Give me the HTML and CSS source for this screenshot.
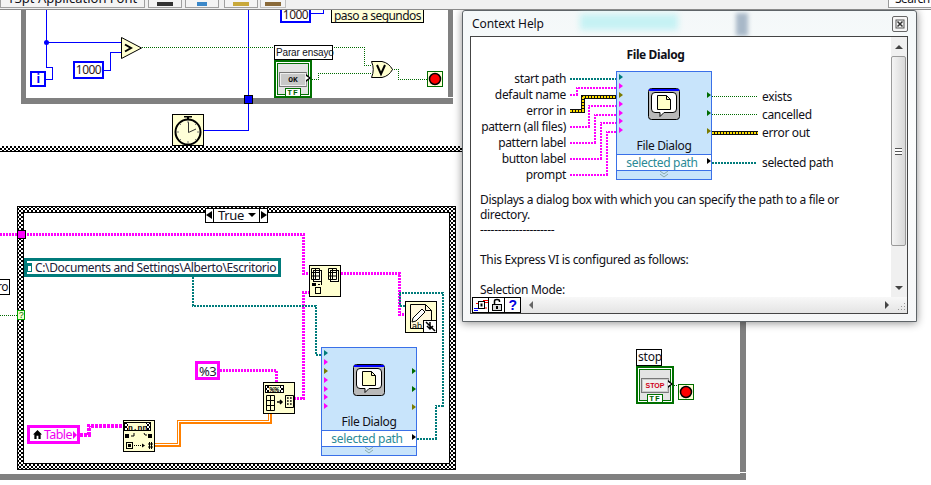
FILE: index.html
```html
<!DOCTYPE html>
<html lang="en">
<head>
<meta charset="utf-8">
<title>Block Diagram</title>
<link rel="stylesheet" href="styles.css">
</head>
<body>
<svg class="defs" width="0" height="0" aria-hidden="true">
  <defs>
    <symbol id="dlg" viewBox="0 0 32 32">
      <rect x=".5" y=".5" width="31" height="31" rx="3" fill="#b9b9b9" stroke="#000"/>
      <rect x="1" y="1" width="30" height="2" fill="#00f"/>
      <path d="M7 4.500H25Q28.500 4.500 28.500 8V21Q28.500 24.500 25 24.500H16L12 28.500V24.500H7Q3.500 24.500 3.500 21V8Q3.500 4.500 7 4.500Z" fill="#fff" stroke="#000"/>
      <path d="M9.500 7.500H18.500L22.500 11.500V21.500H9.500Z" fill="#ffffc8" stroke="#000"/>
      <path d="M18.500 7.500V11.500H22.500" fill="none" stroke="#000"/>
    </symbol>
    <symbol id="ports" viewBox="0 0 96 109">
      <path d="M3 3l4 3-4 3z" fill="#007b7b"/>
      <path d="M3 12l4 3-4 3zM3 30l4 3-4 3zM3 39l4 3-4 3zM3 47l4 3-4 3zM3 56l4 3-4 3z" fill="#f0f"/>
      <path d="M3 21l4 3-4 3z" fill="#7b7b00"/>
      <path d="M91 21l4 3-4 3zM91 39l4 3-4 3z" fill="#006b00"/>
      <path d="M91 57l4 3-4 3z" fill="#7b7b00"/>
      <path d="M91 87l4 3-4 3z" fill="#000"/>
      <path d="M44 100l4 3 4-3M44 103l4 3 4-3" fill="none" stroke="#8aa"/>
    </symbol>
    <symbol id="led" viewBox="0 0 16 16">
      <rect x=".5" y=".5" width="15" height="15" fill="#ffffd8" stroke="#006b00"/>
      <circle cx="8" cy="8" r="5.500" fill="#f00" stroke="#000" stroke-width="1.500"/>
    </symbol>
    <pattern id="chk" width="4" height="4" patternUnits="userSpaceOnUse">
      <rect width="4" height="4" fill="#fff"/>
      <rect width="2" height="2" fill="#000"/>
      <rect x="2" y="2" width="2" height="2" fill="#000"/>
    </pattern>
  </defs>
</svg>

<main class="canvas">
  <header class="toolbar">
    <div class="tool tool-font">13pt Application Font</div>
    <div class="tool tool-a"><span class="glyph"></span></div>
    <div class="tool tool-b"><span class="glyph glyph-blue"></span></div>
    <div class="tool tool-c"><span class="glyph glyph-gold"></span></div>
    <div class="tool tool-d"><span class="glyph glyph-brown"></span></div>
    <div class="search">Search</div>
  </header>

  <div class="outer-frame"></div>
  <div class="while-loop"></div>
  <div class="splitter"></div>

  <div class="case">
    <div class="selector">
      <span class="sel-arrow sel-left"></span>
      <span class="sel-text">True<i class="sel-drop"></i></span>
      <span class="sel-arrow sel-right"></span>
    </div>
  </div>

  <svg class="wires" width="931" height="485" viewBox="0 0 931 485">
    <g class="w-num">
      <path d="M46.500 9V67.500H52.500V79.500H46"/>
      <path d="M46.500 42.500H121"/>
      <path d="M104 70.500H110.500V52.500H121"/>
      <path d="M248.500 9V130.500H204"/>
      <path d="M311 13.500H323.500V9"/>
    </g>
    <circle cx="46.500" cy="42.500" r="2.500" fill="#00f"/>
    <g class="w-bool">
      <path d="M142 47.500H364.500V65.500H372"/>
      <path d="M312 79.500H318.500V73.500H372"/>
      <path d="M392 69.500H398.500V79.500H427"/>
      <path d="M0 315.500H17"/>
      <path d="M674 385.500H678"/>
    </g>
    <g class="w-str">
      <path d="M0 234.500H303.500V273.500H310"/>
      <path d="M341 273.500H399.500V314.500H405"/>
      <path d="M310 292.500H303.500V398.500H295"/>
      <path d="M220 370.500H276.500V382"/>
    </g>
    <path class="w-str w-thick" d="M80 434.500H88.500V425.500H123"/>
    <g class="w-path">
      <path d="M192.500 277V305.500H315.500V354.500H322"/>
      <path d="M405 305.500H399.500V292.500H442.500V405.500H435.500V438.500H417"/>
    </g>
    <path class="w-orange-o" d="M155 444.500H178.500V421.500H269.500V414"/>
    <path class="w-orange-i" d="M155 444.500H178.500V421.500H269.500V414"/>
  </svg>

  <!-- top loop nodes -->
  <div class="num num-i">i</div>
  <div class="const const-a">1000</div>
  <div class="const const-b">1000</div>
  <div class="free-label label-yellow">paso a segundos</div>
  <svg class="prim prim-gt" viewBox="0 0 21 22" width="21" height="22">
    <path d="M.5.500L20.500 11 .5 21.500Z" fill="#ffffd0" stroke="#000"/>
    <path d="M4 7.500L10 11 4 14.500" fill="none" stroke="#000" stroke-width="2"/>
  </svg>
  <div class="blue-node"></div>
  <svg class="prim prim-or" viewBox="0 0 22 17" width="22" height="17">
    <path d="M.5.500H11Q18 2 21.500 8.500 18 15 11 16.500H.5Q4 8.500 .5.500Z" fill="#ffffd0" stroke="#000"/>
    <path d="M6 4L10 13 14 4" fill="none" stroke="#000" stroke-width="2"/>
  </svg>
  <svg class="led led-top"><use href="#led"/></svg>
  <svg class="led led-bottom"><use href="#led"/></svg>

  <svg class="icon icon-clock" viewBox="0 0 32 32">
    <rect x=".5" y=".5" width="31" height="31" fill="#ffffd0" stroke="#000"/>
    <rect x="12" y="2" width="8" height="1.500" fill="#000"/>
    <rect x="15" y="3" width="2" height="3" fill="#000"/>
    <circle cx="16" cy="18" r="12.500" fill="#ffffd8" stroke="#000" stroke-width="2"/>
    <path d="M16.500 8V18.500L24 15" fill="none" stroke="#333"/>
    <path d="M16 7v2M16 27v2M5 18h2M25 18h2M8 10l1 1M24 10l-1 1M8 26l1-1M24 26l-1-1" stroke="#777"/>
  </svg>

  <div class="ctrl-label label-parar">Parar ensayo</div>
  <div class="ctrl ctrl-ok">
    <div class="ctrl-btn">OK</div>
    <div class="ctrl-tf">TF</div>
    <i class="ctrl-out"></i>
  </div>

  <div class="free-label label-cut">ro</div>
  <div class="case-sel">?</div>
  <div class="tunnel"></div>

  <!-- case nodes -->
  <div class="path-const"><span class="path-glyph"></span>C:\Documents and Settings\Alberto\Escritorio</div>
  <div class="str-const str-pct">%3</div>
  <div class="str-const str-table"><i class="home"></i>Table<i class="tri"></i></div>

  <svg class="icon icon-build" viewBox="0 0 32 32">
    <rect x=".5" y=".5" width="31" height="31" fill="#ffffd0" stroke="#000"/>
    <g fill="none" stroke="#000">
      <rect x="4.500" y="5.500" width="8" height="11" fill="#ffffe8"/><path d="M2.500 3.500H10.500V14.500H2.500ZM2.500 7.500H10.500M2.500 11H10.500M6.500 3.500V14.500"/>
      <rect x="21.500" y="5.500" width="8" height="11" fill="#ffffe8"/><path d="M19.500 3.500H27.500V14.500H19.500ZM19.500 7.500H27.500M19.500 11H27.500M23.500 3.500V14.500"/>
      <rect x="6.500" y="22.500" width="5" height="6"/>
    </g>
    <rect x="3" y="18" width="4" height="3" fill="#000"/>
    <path d="M9 19.500h2M12.500 17v3" stroke="#000"/>
  </svg>

  <svg class="icon icon-write" viewBox="0 0 32 32">
    <rect x=".5" y=".5" width="31" height="31" fill="#ffffd0" stroke="#000"/>
    <path d="M5.500 3.500H20.500L26.500 9.500V20.500H19.500V27.500H5.500Z" fill="#fff8dc" stroke="#000"/>
    <path d="M20.500 3.500V9.500H26.500" fill="none" stroke="#000"/>
    <path d="M8 17L17 8 20 11 11 20 7 21Z" fill="#fff" stroke="#000"/>
    <text class="ic-ab" x="7" y="28">ab</text>
    <rect x="18.500" y="19.500" width="13" height="12" fill="#fff" stroke="#000"/>
    <path d="M21 21L30 30M25 21V28M22 25L25 28 28 25" fill="none" stroke="#000" stroke-width="1.500"/>
  </svg>

  <svg class="icon icon-format" viewBox="0 0 32 32">
    <rect x=".5" y=".5" width="31" height="31" fill="#ffffd0" stroke="#000"/>
    <rect x="2.500" y="3.500" width="18" height="7" fill="url(#chk)" stroke="#000"/>
    <rect x="6" y="4" width="11" height="6" fill="#ffffd0"/>
    <text class="ic-small" x="6.500" y="10">%%</text>
    <g fill="none" stroke="#000"><path d="M3.500 13.500H11.500V28.500H3.500ZM3.500 18.500H11.500M3.500 23.500H11.500M7.500 13.500V28.500"/><path d="M22.500 13.500H30.500V25.500H22.500ZM22.500 13.500V25.500"/></g>
    <path d="M14 20h5M17 18l2 2-2 2" fill="none" stroke="#000" stroke-width="1.500"/>
    <path d="M24 16h1M27 16h1M24 19h1M27 19h1M24 22h1M27 22h1M25 15v2M28 15v2M25 18v2M28 18v2M25 21v2M28 21v2" stroke="#000"/>
  </svg>

  <svg class="icon icon-fmtnum" viewBox="0 0 32 32">
    <rect x=".5" y=".5" width="31" height="31" fill="#ffffd0" stroke="#000"/>
    <rect x="1.500" y="2.500" width="26" height="8" fill="url(#chk)" stroke="#000"/>
    <rect x="5" y="3" width="18" height="7" fill="#ffffd0"/>
    <text class="ic-small" x="5" y="10">n.nn</text>
    <rect x="2" y="14" width="4" height="4" fill="#000"/>
    <rect x="25" y="14" width="4" height="4" fill="#000"/>
    <path d="M8 16h3v-3M21 13l1 2h2" fill="none" stroke="#000"/>
    <rect x="3.500" y="22.500" width="6" height="6" fill="none" stroke="#000"/><rect x="5" y="24" width="3" height="3"/>
    <path d="M11 25.500h9" stroke="#000" stroke-dasharray="1 1"/><path d="M20 25.500h1M19 23.500l3 2-3 2z"/>
    <path d="M25 24h5M25 27h5M26.500 22v7M28.500 22v7" stroke="#000"/>
  </svg>

  <div class="node node-main">
    <div class="node-top">
      <svg class="node-icon"><use href="#dlg"/></svg>
      <div class="node-name">File Dialog</div>
    </div>
    <div class="node-row">selected path</div>
    <div class="node-foot"></div>
    <svg class="node-ports"><use href="#ports"/></svg>
  </div>

  <div class="ctrl-label label-stop">stop</div>
  <div class="ctrl ctrl-stop">
    <div class="ctrl-btn btn-stop">STOP</div>
    <div class="ctrl-tf">TF</div>
    <i class="ctrl-out"></i>
  </div>

  <!-- Context Help window -->
  <section class="help">
    <div class="glass-blob"></div>
    <div class="glass-streak"></div>
    <div class="help-title-bar">
      <span>Context Help</span>
      <button class="help-close" type="button" aria-label="Close"><svg viewBox="0 0 10 10" width="10" height="10"><rect x="1" y="1" width="8" height="8" fill="none" stroke="#555"/><path d="M2.500 2.500L7.500 7.500M7.500 2.500L2.500 7.500" stroke="#333" stroke-width="1.500"/></svg></button>
    </div>
    <div class="help-inner">
      <div class="help-main">
        <div class="help-doc">
          <h2 class="help-name">File Dialog</h2>
          <div class="help-diagram">
            <ul class="help-inputs">
              <li>start path</li><li>default name</li><li>error in</li><li>pattern (all files)</li><li>pattern label</li><li>button label</li><li>prompt</li>
            </ul>
            <svg class="help-wires" width="400" height="130" viewBox="480 62 400 130">
              <g class="w-path w-thin"><path d="M570 78.500H616"/><path d="M712 162.500H757"/></g>
              <g class="w-str w-thin">
                <path d="M570 94.500H576.500V87.500H616"/>
                <path d="M570 126.500H588.500V105.500H616"/>
                <path d="M570 142.500H594.500V114.500H616"/>
                <path d="M570 158.500H600.500V122.500H616"/>
                <path d="M570 174.500H606.500V131.500H616"/>
              </g>
              <path class="w-err-o" d="M570 110.500H582.500V96.500H616"/>
              <path class="w-err-i" d="M570 110.500H582.500V96.500H616"/>
              <path class="w-err-o" d="M712 132.500H758"/>
              <path class="w-err-i" d="M712 132.500H758"/>
              <g class="w-bool"><path d="M712 96.500H757"/><path d="M712 114.500H757"/></g>
            </svg>
            <div class="node node-help">
              <div class="node-top">
                <svg class="node-icon"><use href="#dlg"/></svg>
                <div class="node-name">File Dialog</div>
              </div>
              <div class="node-row">selected path</div>
              <div class="node-foot"></div>
              <svg class="node-ports"><use href="#ports"/></svg>
            </div>
            <ul class="help-outputs">
              <li>exists</li><li>cancelled</li><li>error out</li><li class="out-gap">selected path</li>
            </ul>
          </div>
          <p class="help-text">Displays a dialog box with which you can specify the path to a file or directory.<br>---------------------<br><br>This Express VI is configured as follows:<br><br>Selection Mode:</p>
        </div>
        <div class="vscroll">
          <div class="sb-btn"><i class="tri-up"></i></div>
          <div class="sb-thumb"><i class="sb-grip"></i></div>
          <div class="sb-track"></div>
          <div class="sb-btn"><i class="tri-down"></i></div>
        </div>
      </div>
      <div class="hbar">
        <div class="hbar-tools">
          <span class="hbar-tool"><svg viewBox="0 0 14 14" width="14" height="14"><path d="M0 10.500H5M0 12.500H4" stroke="#00f"/><path d="M9 2.500H14M9 4.500H14M2 5.500H5M9 10H13" stroke="#f00"/><rect x="4.500" y="3.500" width="6" height="7" fill="#fff" stroke="#000"/><path d="M6.500 5.500h2v3h-2z" fill="#000"/></svg></span>
          <span class="hbar-tool"><svg viewBox="0 0 14 14" width="14" height="14"><rect x="2.500" y="6.500" width="9" height="6" fill="#ddd" stroke="#000"/><path d="M4.500 6.500V3Q4.500 1.500 7 1.500 9.500 1.500 9.500 3V4" fill="none" stroke="#000" stroke-width="1.500"/><rect x="6" y="8" width="2" height="3"/></svg></span>
          <span class="hbar-tool hbar-q">?</span>
        </div>
        <i class="tri-left"></i>
        <i class="tri-right"></i>
        <svg class="grip" viewBox="0 0 10 10" width="10" height="10"><path d="M8 1h1v1H8zM5 4h1v1H5zM8 4h1v1H8zM2 7h1v1H2zM5 7h1v1H5zM8 7h1v1H8z" fill="#999"/></svg>
      </div>
    </div>
  </section>
</main>
</body>
</html>
```
FILE: styles.css
```css
* { box-sizing: border-box; }
html, body { margin: 0; padding: 0; background: #fff; }
.defs { position: absolute; }
.canvas {
  position: relative;
  width: 931px;
  height: 485px;
  overflow: hidden;
  background: #fff;
  font-family: "Noto Sans", "Open Sans", sans-serif;
  font-size: 12px;
  letter-spacing: -.55px;
  color: #101018;
}

/* toolbar */
.toolbar {
  position: absolute;
  z-index: 5;
  left: 0; top: 0;
  width: 931px;
  height: 10px;
  display: flex;
  align-items: flex-end;
  gap: 3px;
  padding-bottom: 1px;
  background: #f0f0f0;
  border-bottom: 1px solid #8a8a8a;
  overflow: hidden;
}
.tool {
  flex: none;
  height: 20px;
  display: flex;
  align-items: flex-end;
  justify-content: center;
  background: #f4f4f4;
  border: 1px solid #a0a0a0;
}
.tool-font { width: 145px; justify-content: flex-start; padding: 0 0 4px 6px; line-height: 9px; font-size: 13px; letter-spacing: 0; }
.tool-a { width: 34px; }
.tool-b { width: 34px; }
.tool-c { width: 34px; margin-left: 2px; }
.tool-d { width: 26px; margin-left: -1px; border-color: #c0c0c0; }
.glyph { width: 16px; height: 4px; margin-bottom: 1px; background: #333; }
.glyph-blue { background: #3a87c8; width: 10px; }
.glyph-gold { background: #c8a83a; }
.glyph-brown { background: #8a6a3a; }
.search {
  margin-left: auto;
  width: 43px;
  height: 20px;
  padding: 0 0 4px 6px;
  line-height: 9px;
  display: flex;
  align-items: flex-end;
  white-space: nowrap;
  overflow: hidden;
  border: 1px solid #999;
  border-right: 0;
  background: #fff;
}

/* structures */
.outer-frame {
  position: absolute;
  left: -10px; top: 0;
  width: 756px; height: 480px;
  border-right: 6px solid #808080;
  border-bottom: 6px solid #808080;
}
.outer-frame::after {
  content: "";
  position: absolute;
  right: -6px; bottom: 1px;
  width: 8px; height: 1px;
  background: #fff;
}
.while-loop {
  position: absolute;
  left: 21px; top: 0;
  width: 432px; height: 104px;
  border: 5px solid #808080;
  border-top: 0;
  border-bottom-width: 6px;
}
.while-loop::after {
  content: "";
  position: absolute;
  right: -5px; bottom: 0;
  width: 8px; height: 1px;
  background: #fff;
}
.splitter {
  position: absolute;
  left: 0; top: 146px;
  width: 463px; height: 6px;
  background: repeating-conic-gradient(#000 0 25%, #fff 0 50%) 0 0 / 4px 4px;
  border-bottom: 1px solid #000;
}
.case {
  position: absolute;
  left: 17px; top: 206px;
  width: 439px; height: 264px;
  border: 6px solid transparent;
  background:
    linear-gradient(#fff, #fff) padding-box,
    repeating-conic-gradient(#000 0 25%, #fff 0 50%) 0 0 / 4px 4px border-box;
  outline: 1px solid #000;
  outline-offset: -1px;
  box-shadow: inset 0 0 0 1px #000;
}
.selector {
  position: absolute;
  left: 182px; top: -4px;
  width: 63px; height: 15px;
  display: flex;
  background: #fff;
  border: 1px solid #000;
}
.sel-arrow { flex: none; width: 8px; position: relative; }
.sel-arrow::after {
  content: "";
  position: absolute;
  top: 2px;
  border: 4.500px solid transparent;
}
.sel-left { border-right: 1px solid #000; }
.sel-left::after { left: 0; border-right: 6px solid #000; border-left: 0; }
.sel-right { border-left: 1px solid #000; }
.sel-right::after { right: 0; border-left: 6px solid #000; border-right: 0; }
.sel-text { flex: 1; position: relative; padding-left: 4px; line-height: 13px; font-size: 13px; letter-spacing: -.3px; }
.sel-drop {
  position: absolute;
  right: 3px; top: 4px;
  border: 4px solid transparent;
  border-top: 4px solid #000;
  border-bottom: 0;
}

/* wires */
.wires, .prim, .led, .icon, .num, .const, .free-label, .blue-node, .ctrl-label, .ctrl,
.case-sel, .tunnel, .path-const, .str-const, .node-main { position: absolute; }
.wires { left: 0; top: 0; }
.wires path, .help-wires path { fill: none; shape-rendering: crispEdges; }
.w-num path { stroke: #00f; stroke-width: 1; }
.w-bool path, .w-bool { stroke: #006b00; stroke-width: 1; stroke-dasharray: 1 1; }
.w-str path, path.w-str { stroke: #ff00ff; stroke-width: 3; stroke-dasharray: 2 1; }
path.w-thick { stroke-width: 4; stroke-dasharray: 3 1; }
.w-path path { stroke: #007b7b; stroke-width: 2; stroke-dasharray: 2 1; }
.w-thin path { stroke-width: 2; stroke-dasharray: 2 1; }
.w-orange-o { stroke: #ff8000; stroke-width: 4; }
.w-orange-i { stroke: #fff; stroke-width: 1; }
.w-err-o { stroke: #111; stroke-width: 4; }
.w-err-i { stroke: #ffe000; stroke-width: 2; stroke-dasharray: 2 1; }

/* terminals */
.num {
  left: 30px; top: 71px;
  width: 16px; height: 16px;
  border: 2px solid #00f;
  background: #fff;
  color: #00f;
  font: bold 12px/12px "Noto Sans", sans-serif;
  text-align: center;
}
.const {
  width: 31px;
  border: 2px solid #00f;
  background: #fff;
  text-align: center;
  line-height: 14px;
  color: #301818;
}
.const-a { left: 73px; top: 61px; height: 18px; }
.const-b { left: 280px; top: 4px; height: 19px; line-height: 18px; }
.free-label {
  border: 1px solid #000;
  background: #fff;
  white-space: nowrap;
}
.label-yellow {
  left: 331px; top: 8px;
  width: 93px; height: 15px;
  padding-left: 2px;
  line-height: 13px;
  background: #ffffd8;
}
.label-cut { left: -8px; top: 279px; width: 18px; height: 16px; line-height: 14px; text-align: right; padding-right: 1px; overflow: hidden; }
.prim-gt { left: 121px; top: 37px; }
.prim-or { left: 371px; top: 61px; }
.led { width: 16px; height: 16px; }
.led-top { left: 427px; top: 71px; }
.led-bottom { left: 678px; top: 384px; }
.blue-node {
  left: 244px; top: 95px;
  width: 9px; height: 9px;
  background: #00f;
  border: 1px solid #000;
}
.icon { width: 32px; height: 32px; }
.icon-clock { left: 172px; top: 114px; }
.icon-build { left: 309px; top: 265px; }
.icon-write { left: 405px; top: 301px; }
.icon-format { left: 263px; top: 382px; }
.icon-fmtnum { left: 123px; top: 420px; }
.ic-ab { font: 9px "Liberation Sans", sans-serif; letter-spacing: 0; fill: #000; }
.ic-small { font: bold 8px "Liberation Mono", monospace; letter-spacing: 0; fill: #000; }

/* controls */
.ctrl-label {
  border: 1px solid #000;
  background: #fff;
  white-space: nowrap;
  height: 16px;
}
.label-parar {
  left: 274px; top: 45px;
  width: 59px; height: 15px;
  font: 10px/13px "Liberation Sans", sans-serif;
  letter-spacing: -.15px;
  padding-left: 1px;
}
.label-stop {
  left: 636px; top: 349px;
  width: 26px; height: 17px;
  line-height: 14px;
  padding-left: 1px;
  letter-spacing: -.2px;
}
.ctrl {
  width: 38px; height: 38px;
  border: 2px solid #007000;
  background: #e4e4e4;
  box-shadow: inset 0 0 0 1px #fff, inset 0 0 0 2px #007000;
  display: flex;
  flex-direction: column;
  align-items: center;
  letter-spacing: 0;
}
.ctrl-ok { left: 274px; top: 60px; }
.ctrl-stop { left: 636px; top: 366px; }
.ctrl-btn {
  margin-top: 10px;
  width: 28px; height: 15px;
  background: #c8c8c8;
  border: 1px solid #777;
  border-right-color: #999;
  box-shadow: inset 0 0 0 1px #eee;
  font: bold 8px/13px "Liberation Mono", monospace;
  text-align: center;
  color: #111;
}
.btn-stop { color: #d00018; font-family: "Liberation Sans", sans-serif; font-size: 7px; background: #eee; box-shadow: inset 0 0 0 1px #ccc; }
.ctrl-tf {
  margin-top: auto;
  width: 16px; height: 8px;
  border: 1px solid #007000;
  border-bottom: 0;
  background: #fff;
  color: #006000;
  font: bold 8px/7px "Liberation Mono", monospace;
  text-align: center;
  letter-spacing: 1px;
}
.ctrl-out {
  position: absolute;
  right: -1px; top: 12px;
  width: 0; height: 0;
  border: 4px solid transparent;
  border-left: 5px solid #000;
  border-right: 0;
}
.ctrl-out::after {
  content: "";
  position: absolute;
  left: -5px; top: -2.500px;
  border: 2.500px solid transparent;
  border-left: 3px solid #fff;
  border-right: 0;
}

/* case terminals */
.case-sel {
  left: 17px; top: 310px;
  width: 8px; height: 10px;
  background: #f4ffd0;
  border: 1px solid #00a000;
  color: #007000;
  font: 9px/8px "Liberation Sans", sans-serif;
  text-align: center;
}
.tunnel {
  left: 17px; top: 230px;
  width: 9px; height: 9px;
  background: #f0f;
  border: 1px solid #000;
}
.path-const {
  left: 24px; top: 258px;
  width: 257px; height: 19px;
  border: 3px solid #007b7b;
  background: #fff;
  display: flex;
  align-items: center;
  white-space: nowrap;
  overflow: hidden;
  letter-spacing: -.36px;
  color: #202038;
}
.path-glyph {
  flex: none;
  width: 5px; height: 9px;
  margin-right: 3px;
  border: 1px solid #007b7b;
  border-top-width: 3px;
}
.str-const {
  border: 3px solid #f0f;
  background: #fff;
  display: flex;
  align-items: center;
  white-space: nowrap;
  height: 19px;
}
.str-pct { left: 195px; top: 361px; width: 25px; justify-content: center; color: #202038; font-size: 13px; }
.str-table { left: 27px; top: 425px; width: 53px; color: #f000f0; padding-left: 3px; font-size: 12.500px; letter-spacing: -.6px; }
.home {
  flex: none;
  width: 9px; height: 9px;
  margin-right: 2px;
  background: #000;
  clip-path: polygon(50% 0, 100% 50%, 85% 50%, 85% 100%, 60% 100%, 60% 65%, 40% 65%, 40% 100%, 15% 100%, 15% 50%, 0 50%);
}
.tri {
  flex: none;
  margin-left: 1px;
  border: 4px solid transparent;
  border-left: 4px solid #f000f0;
  border-right: 0;
}

/* Express VI */
.node {
  width: 96px; height: 109px;
  display: flex;
  flex-direction: column;
  background: #c8e4fb;
  border: 1px solid #3a70e8;
  letter-spacing: -.33px;
}
.node-main { left: 321px; top: 347px; }
.node-help { position: absolute; left: 136px; top: 9px; }
.node-top {
  flex: none;
  height: 82px;
  display: flex;
  flex-direction: column;
  align-items: center;
  padding-top: 16px;
}
.node-icon { width: 32px; height: 32px; }
.node-name { margin-top: auto; line-height: 16px; color: #101018; }
.node-row {
  flex: none;
  height: 17px;
  background: #fff;
  border-top: 1px solid #3a70e8;
  border-bottom: 1px solid #3a70e8;
  color: #2a8a96;
  text-align: center;
  line-height: 15px;
  padding-right: 4px;
}
.node-foot { flex: 1; }
.node-ports { position: absolute; left: -1px; top: -1px; width: 96px; height: 109px; }

/* Context help */
.help {
  position: absolute;
  z-index: 4;
  left: 462px; top: 10px;
  width: 455px; height: 312px;
  display: flex;
  flex-direction: column;
  padding: 0 8px 7px 7px;
  background: linear-gradient(#f4f8f9, #fcfdfd 40%, #f6f7f8);
  border: 1px solid #5e6468;
  border-radius: 3px 3px 0 0;
  box-shadow: 0 1px 9px rgba(0, 0, 0, .45);
  letter-spacing: -.33px;
}
.glass-blob {
  position: absolute;
  left: 117px; top: 3px;
  width: 98px; height: 16px;
  background: #c6f2f4;
  filter: blur(3px);
}
.glass-streak {
  position: absolute;
  left: 273px; top: 2px;
  width: 12px; height: 23px;
  background: #a8b8c8;
  filter: blur(2px);
}
.help-title-bar {
  position: relative;
  flex: none;
  height: 25px;
  display: flex;
  align-items: center;
  justify-content: space-between;
  padding: 0 0 0 2px;
  letter-spacing: -.1px;
}
.help-close {
  width: 16px; height: 16px;
  padding: 0;
  display: flex;
  align-items: center;
  justify-content: center;
  background: #f6f6f6;
  border: 1px solid #666;
  border-radius: 2px;
}
.help-inner {
  position: relative;
  flex: 1;
  min-height: 0;
  display: flex;
  flex-direction: column;
  background: #fff;
  border: 1px solid #444;
}
.help-main { flex: 1; min-height: 0; display: flex; }
.help-doc {
  flex: 1;
  min-width: 0;
  overflow: hidden;
  padding: 10px 0 0 9px;
  line-height: 15px;
}
.help-name { width: 351px; margin: 0; font-size: 12px; line-height: 15px; font-weight: 700; text-align: center; letter-spacing: -.4px; }
.help-diagram { position: relative; width: 400px; height: 130px; }
.help-wires { position: absolute; left: 0; top: 0; }
.help-inputs, .help-outputs { position: absolute; margin: 0; padding: 0; list-style: none; white-space: nowrap; }
.help-inputs { left: 0; top: 9px; width: 86px; text-align: right; line-height: 16px; }
.help-outputs { left: 282px; top: 26px; line-height: 18px; }
.out-gap { margin-top: 12px; }
.help-text { width: 372px; margin: 0; }
.vscroll {
  flex: none;
  width: 16px;
  display: flex;
  flex-direction: column;
  background: #f0f0f0;
  padding-right: 1px;
}
.sb-btn { flex: none; height: 19px; display: flex; align-items: center; justify-content: center; }
.sb-thumb {
  flex: none;
  height: 190px;
  display: flex;
  align-items: center;
  justify-content: center;
  background: linear-gradient(90deg, #f4f4f4, #d8d8d8);
  border: 1px solid #9a9a9a;
  border-radius: 2px;
}
.sb-grip { width: 7px; height: 7px; border-top: 1px solid #555; border-bottom: 1px solid #555; background: linear-gradient(#fff 40%, #555 40% 60%, #fff 60%); }
.sb-track { flex: 1; }
.tri-up, .tri-down, .tri-left, .tri-right { display: block; width: 0; height: 0; border: 4px solid transparent; }
.tri-up { border-bottom: 4px solid #444; border-top: 0; }
.tri-down { border-top: 4px solid #444; border-bottom: 0; }
.tri-left { margin-left: 8px; border-right: 4px solid #666; border-left: 0; }
.tri-right { margin-left: auto; border-left: 4px solid #444; border-right: 0; }
.hbar {
  flex: none;
  height: 16px;
  display: flex;
  align-items: center;
  background: linear-gradient(#f8f8f8, #e4e4e4);
}
.hbar-tools { flex: none; display: flex; }
.hbar-tool {
  width: 17px; height: 16px;
  margin-left: -1px;
  display: flex;
  align-items: center;
  justify-content: center;
  background: #fff;
  border: 1px solid #000;
}
.hbar-tool:first-child { margin-left: 1px; }
.hbar-q { color: #0000e0; font: bold 14px/14px "Liberation Sans", sans-serif; }
.grip { margin: 4px 1px 0 7px; flex: none; }
```
